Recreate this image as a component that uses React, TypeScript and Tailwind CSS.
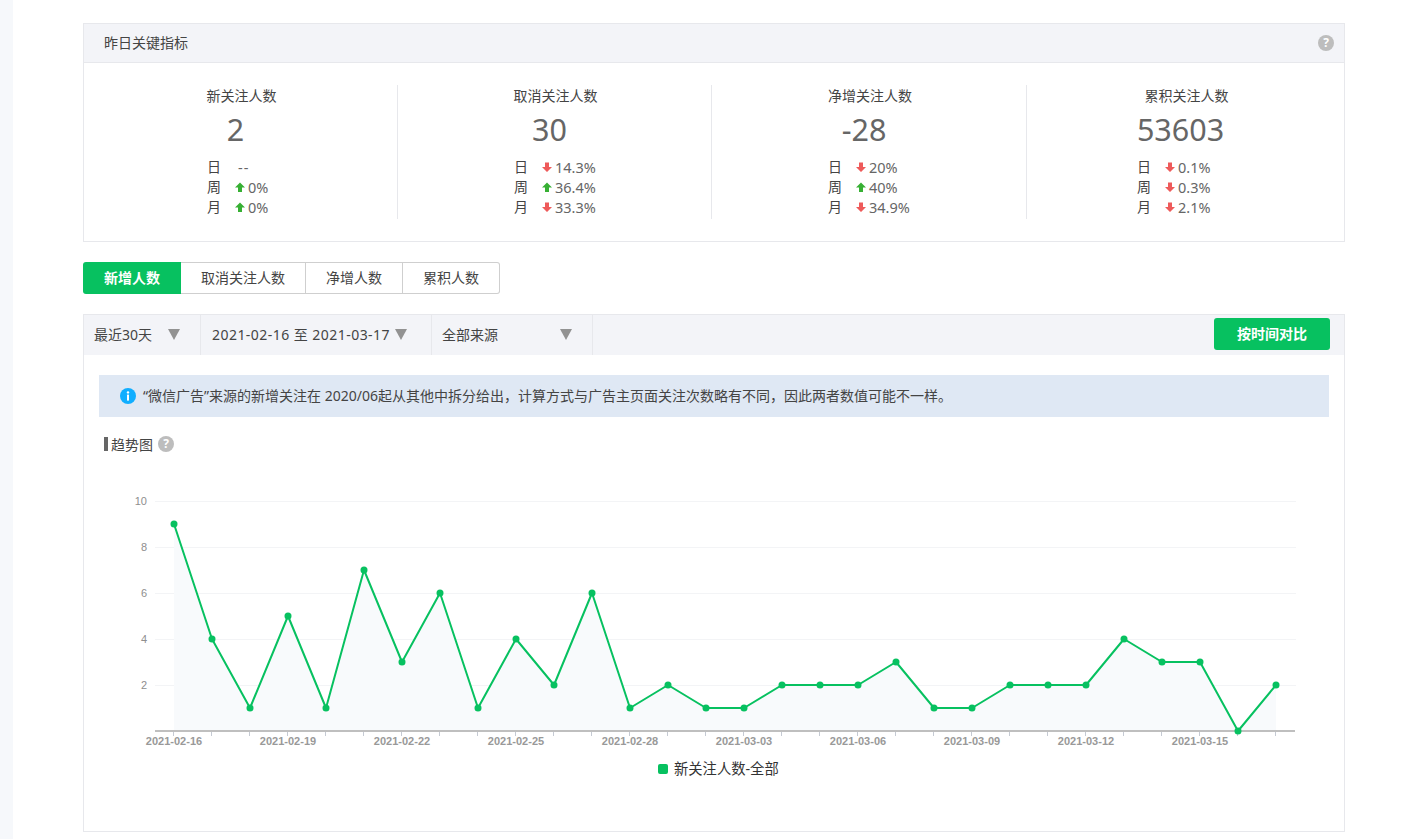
const font = '"Noto Sans", "Noto Sans CJK SC", sans-serif';

type Row = { label: string; dir: 'up' | 'down' | 'none'; value: string };
type Stat = { title: string; num: string; numShift: string; rowPad: string; width: string; rows: Row[] };

const stats: Stat[] = [
  { title: '新关注人数', num: '2', numShift: 'pr-[10px]', rowPad: 'pl-[123px]', width: 'w-[314px]', rows: [
    { label: '日', dir: 'none', value: '--' }, { label: '周', dir: 'up', value: '0%' }, { label: '月', dir: 'up', value: '0%' } ] },
  { title: '取消关注人数', num: '30', numShift: 'pr-[10px]', rowPad: 'pl-[116px]', width: 'w-[314px]', rows: [
    { label: '日', dir: 'down', value: '14.3%' }, { label: '周', dir: 'up', value: '36.4%' }, { label: '月', dir: 'down', value: '33.3%' } ] },
  { title: '净增关注人数', num: '-28', numShift: 'pr-[10px]', rowPad: 'pl-[116px]', width: 'w-[315px]', rows: [
    { label: '日', dir: 'down', value: '20%' }, { label: '周', dir: 'up', value: '40%' }, { label: '月', dir: 'down', value: '34.9%' } ] },
  { title: '累积关注人数', num: '53603', numShift: 'pr-[10px]', rowPad: 'pl-[110px]', width: 'flex-1', rows: [
    { label: '日', dir: 'down', value: '0.1%' }, { label: '周', dir: 'down', value: '0.3%' }, { label: '月', dir: 'down', value: '2.1%' } ] },
];

function Arrow({ dir }: { dir: 'up' | 'down' }) {
  return (
    <svg width="10" height="10" viewBox="0 0 10 10" className="shrink-0">
      {dir === 'up'
        ? <path d="M5 0.5 L10 5.5 L7 5.5 L7 10 L3 10 L3 5.5 L0 5.5 Z" fill="#37b034" />
        : <path d="M5 10 L10 5 L7 5 L7 0.5 L3 0.5 L3 5 L0 5 Z" fill="#ee5a5a" />}
    </svg>
  );
}

function Help() {
  return (
    <span className="flex h-4 w-4 items-center justify-center rounded-full bg-[#bdbdbd] text-[12px] font-bold leading-none text-white">?</span>
  );
}

function Caret() {
  return <span className="h-0 w-0 shrink-0 border-x-[6.5px] border-t-[11px] border-x-transparent border-t-[#929292]" />;
}

const values = [9, 4, 1, 5, 1, 7, 3, 6, 1, 4, 2, 6, 1, 2, 1, 1, 2, 2, 2, 3, 1, 1, 2, 2, 2, 4, 3, 3, 0, 2];
const dates = ['2021-02-16', '2021-02-19', '2021-02-22', '2021-02-25', '2021-02-28', '2021-03-03', '2021-03-06', '2021-03-09', '2021-03-12', '2021-03-15'];
const X0 = 90;
const STEP = 38;
const BASE = 240;
const yOf = (v: number) => BASE - v * 23;
const px = (i: number) => X0 + i * STEP;

function Chart() {
  const line = values.map((v, i) => `${i ? 'L' : 'M'}${px(i)} ${yOf(v)}`).join(' ');
  const area = `${line} L${px(29)} ${BASE} L${px(0)} ${BASE} Z`;
  return (
    <svg width="1260" height="268" viewBox="0 0 1260 268" className="block">
      {[2, 4, 6, 8, 10].map((v) => (
        <g key={v}>
          <line x1="71" x2="1212" y1={yOf(v) + 0.5} y2={yOf(v) + 0.5} stroke="#f3f4f6" />
          <text x="63" y={yOf(v) + 4} textAnchor="end" fontSize="11" fill="#8e8e8e" fontFamily="Liberation Sans, sans-serif">{v}</text>
        </g>
      ))}
      <path d={area} fill="#f8fafc" />
      <line x1="71" x2="1211" y1={BASE} y2={BASE} stroke="#bfbfbf" strokeWidth="2" />
      {values.map((_, i) => (
        <line key={i} x1={px(i) - 0.5} x2={px(i) - 0.5} y1={BASE + 1} y2={BASE + 5} stroke="#c5cad3" />
      ))}
      <path d={line} fill="none" stroke="#07c160" strokeWidth="2" strokeLinejoin="round" />
      {values.map((v, i) => (
        <circle key={i} cx={px(i)} cy={yOf(v)} r="3.5" fill="#07c160" />
      ))}
      {dates.map((d, i) => (
        <text key={d} x={px(i * 3)} y={BASE + 14} textAnchor="middle" fontSize="11" fontWeight="700" fill="#999" fontFamily="Liberation Sans, sans-serif">{d}</text>
      ))}
    </svg>
  );
}

export default function App() {
  return (
    <div className="flex h-[839px] overflow-hidden bg-white text-[14px] text-[#444]" style={{ fontFamily: font }}>
      <div className="w-[13px] shrink-0 bg-[#f6f8fb]" />
      <main className="ml-[70px] w-[1262px] pt-[23px]">
        <section className="h-[219px] border border-[#e7e8ec]">
          <header className="flex h-[39px] items-center justify-between border-b border-[#e7e8ec] bg-[#f3f4f8] pl-5 pr-[10px] leading-none">
            <span>昨日关键指标</span>
            <Help />
          </header>
          <div className="flex pt-[22px]">
            {stats.map((s, i) => (
              <div key={s.title} className={`flex h-[134px] flex-col ${s.width} ${i < 3 ? 'border-r border-[#e7e8ec]' : ''}`}>
                <div className="mt-[1px] pl-[2px] text-center leading-5">{s.title}</div>
                <div className={`mt-[3px] text-center text-[30.5px] leading-[40px] text-[#666] ${s.numShift}`}>{s.num}</div>
                <div className={`mt-[8px] flex flex-col ${s.rowPad}`}>
                  {s.rows.map((r) => (
                    <div key={r.label} className="flex h-5 items-center leading-5">
                      <span className="w-[28px]">{r.label}</span>
                      {r.dir === 'none'
                        ? <span className="ml-[3px] text-[14.5px] tracking-[1px] text-[#666]">--</span>
                        : <Arrow dir={r.dir} />}
                      {r.dir !== 'none' && <span className="ml-[3px] text-[14.5px] text-[#666]">{r.value}</span>}
                    </div>
                  ))}
                </div>
              </div>
            ))}
          </div>
        </section>

        <nav className="mt-5 flex h-8 w-[417px]">
          <div className="flex w-[98px] items-center justify-center rounded-l-[3px] bg-[#07c160] pb-[2px] font-bold text-white">新增人数</div>
          <div className="flex w-[125px] items-center justify-center border-y border-r border-[#cfcfcf] pb-[2px]">取消关注人数</div>
          <div className="flex w-[97px] items-center justify-center border-y border-r border-[#cfcfcf] pb-[2px]">净增人数</div>
          <div className="flex w-[97px] items-center justify-center rounded-r-[3px] border-y border-r border-[#cfcfcf] pb-[2px]">累积人数</div>
        </nav>

        <section className="mt-5 h-[518px] border border-[#e7e8ec]">
          <div className="flex h-10 items-start bg-[#f3f4f8] text-[#444]">
            <div className="flex h-full w-[117px] items-center justify-between border-r border-[#e7e8ec] pb-[2px] pl-[10px] pr-[20px]">
              <span>最近30天</span><Caret />
            </div>
            <div className="flex h-full w-[231px] items-center justify-between border-r border-[#e7e8ec] pb-[2px] pl-[11px] pr-[24px]">
              <span className="tracking-[0.46px]">2021-02-16 至 2021-03-17</span><Caret />
            </div>
            <div className="flex h-full w-[161px] items-center justify-between border-r border-[#e7e8ec] pb-[2px] pl-[10px] pr-[20px]">
              <span>全部来源</span><Caret />
            </div>
            <button className="ml-auto mr-[14px] mt-[3px] flex h-8 w-[116px] items-center justify-center rounded-[3px] bg-[#07c160] pb-[2px] font-bold text-white">按时间对比</button>
          </div>
          <div className="mx-[15px] mt-5 flex h-[42px] items-center bg-[#dfe8f4] pl-[21px]">
            <svg width="16" height="16" viewBox="0 0 16 16" className="mr-[7px] shrink-0">
              <circle cx="8" cy="8" r="8" fill="#10aeff" />
              <circle cx="8" cy="4.4" r="1.2" fill="#fff" />
              <rect x="7" y="6.6" width="2" height="6" fill="#fff" />
            </svg>
            <span className="pb-[2px]">“微信广告”来源的新增关注在 2020/06起从其他中拆分给出，计算方式与广告主页面关注次数略有不同，因此两者数值可能不一样。</span>
          </div>
          <div className="ml-5 mt-[19px] flex h-4 items-center">
            <span className="mr-[3px] h-[14px] w-[4px] bg-[#666]" />
            <span className="mr-[5px]">趋势图</span>
            <Help />
          </div>
          <div className="mt-[39px]">
            <Chart />
            <div className="mt-[-1px] flex items-center pl-[574px] text-[14.3px] text-[#333]">
              <span className="mr-[6px] h-[10px] w-[10px] rounded-[2px] bg-[#07c160]" />
              <span>新关注人数-全部</span>
            </div>
          </div>
        </section>
      </main>
    </div>
  );
}
